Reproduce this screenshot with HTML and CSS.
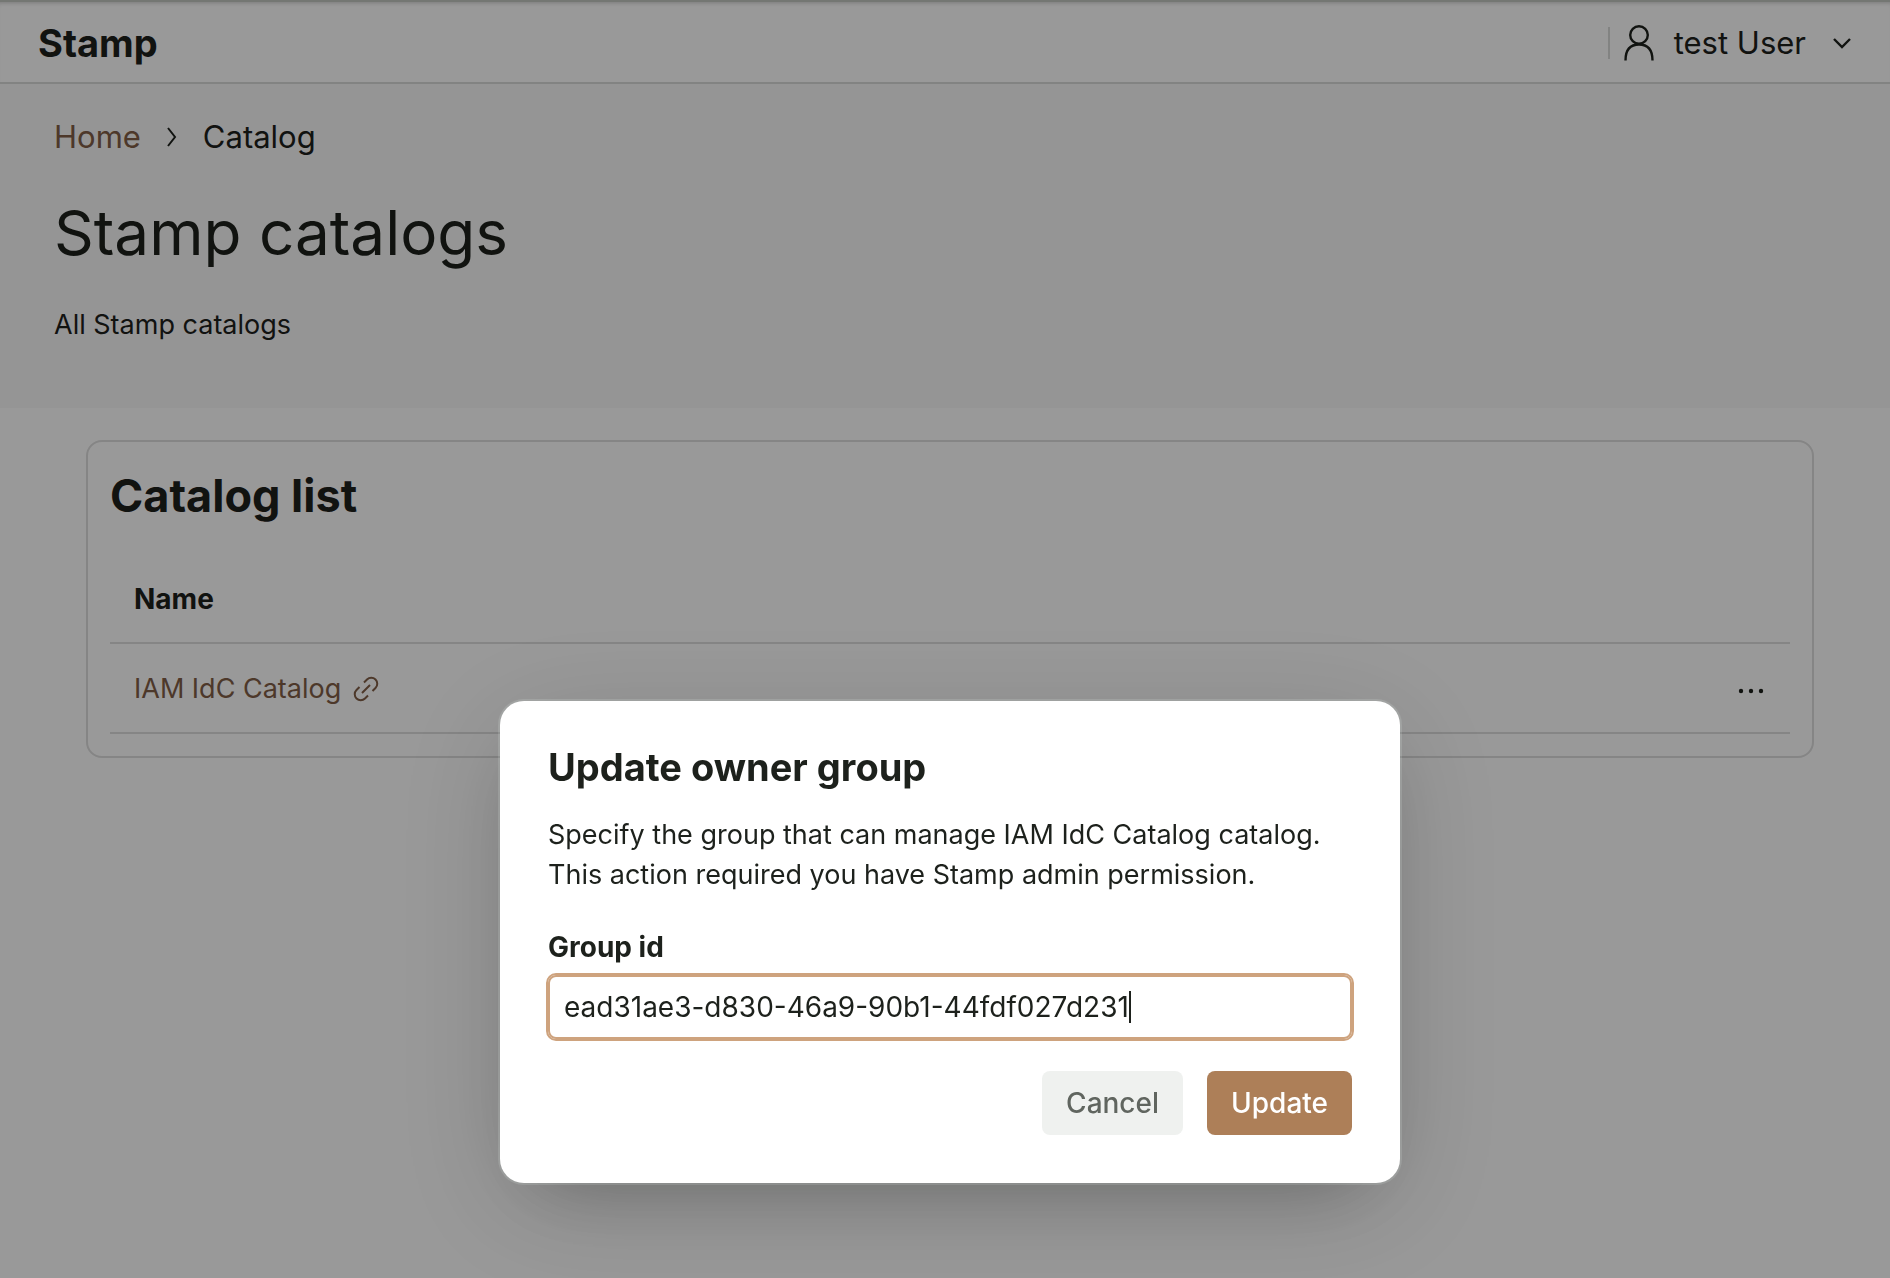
FILE: index.html
```html
<!DOCTYPE html>
<html lang="en">
<head>
<meta charset="utf-8">
<title>Stamp catalogs</title>
<link rel="stylesheet" href="styles.css">
</head>
<body>
<div class="page">
  <header class="topbar">
    <strong class="brand">Stamp</strong>
    <div class="account">
      <button class="account-button" type="button">
        <svg class="icon-user" viewBox="0 0 34 40" aria-hidden="true"><circle cx="17" cy="12" r="8.800"/><path d="M3.500 37.500C3.500 27 8 21.500 17 21.500s13.500 5.500 13.500 16"/></svg>
        <span>test User</span>
        <svg class="icon-down" viewBox="0 0 20 12" aria-hidden="true"><path d="M2 2l8 8 8-8"/></svg>
      </button>
    </div>
  </header>
  <section class="hero">
    <nav class="breadcrumb" aria-label="Breadcrumb">
      <a href="#">Home</a>
      <svg class="icon-right" viewBox="0 0 10 20" aria-hidden="true"><path d="M1 1l7 9-7 9"/></svg>
      <span>Catalog</span>
    </nav>
    <h1 class="hero-title">Stamp catalogs</h1>
    <p class="hero-text">All Stamp catalogs</p>
  </section>
  <main class="card">
    <h2 class="card-title">Catalog list</h2>
    <table class="catalogs">
      <thead>
        <tr><th scope="col">Name</th><td></td></tr>
      </thead>
      <tbody>
        <tr>
          <td><a class="catalog-link" href="#">IAM IdC Catalog
            <svg class="icon-link" viewBox="0 0 26 26" aria-hidden="true"><path d="M9 17l8-8M11 6.500l3-3a5.700 5.700 0 0 1 8.500 8.500l-3 3M6.500 11l-3 3a5.700 5.700 0 0 0 8.500 8.500l3-3"/></svg></a></td>
          <td class="row-actions"><button class="more" type="button" aria-label="Catalog actions"><svg class="icon-more" viewBox="0 0 30 6" aria-hidden="true"><circle cx="5" cy="3" r="2.200"/><circle cx="15" cy="3" r="2.200"/><circle cx="25" cy="3" r="2.200"/></svg></button></td>
        </tr>
      </tbody>
    </table>
  </main>
</div>
<div class="overlay">
  <form class="dialog" role="dialog" aria-labelledby="dialog-title">
    <h2 class="dialog-title" id="dialog-title">Update owner group</h2>
    <p class="dialog-text">Specify the group that can manage IAM IdC Catalog catalog. This action required you have Stamp admin permission.</p>
    <label class="field-label" for="group-id">Group id</label>
    <div class="field-box">
      <input class="field" id="group-id" type="text" value="ead31ae3-d830-46a9-90b1-44fdf027d231">
      <span class="caret" aria-hidden="true"></span>
    </div>
    <div class="dialog-actions">
      <button class="button button-soft" type="button">Cancel</button>
      <button class="button button-solid" type="submit">Update</button>
    </div>
  </form>
</div>
</body>
</html>
```
FILE: styles.css
```css
* { box-sizing: border-box; }

body {
  margin: 0;
  background: #fff;
  color: #1d211c;
  font: 27px/40px Inter, "Liberation Sans", sans-serif;
}

h1, h2, p { margin: 0; }

a { color: #815e46; text-decoration: none; }

button, input { font: inherit; color: inherit; }

svg { fill: none; stroke: currentColor; stroke-width: 2; flex: none; }

.page { min-height: 100vh; border-top: 2px solid #c2c6c0; }

.topbar {
  display: flex;
  align-items: center;
  justify-content: space-between;
  height: 82px;
  padding: 2px 38px 0;
  border-bottom: 2px solid #d9dad9;
  box-shadow: inset 0 4px 4px -3px rgba(0, 0, 0, 0.2);
}

.brand { font-size: 38px; line-height: 56px; }

.account {
  display: flex;
  align-items: center;
  height: 32px;
  border-left: 2px solid #d9dad9;
}

.account-button {
  display: flex;
  align-items: center;
  padding: 0 0 0 12px;
  border: 0;
  background: none;
  font-size: 31px;
}

.account-button span { margin: 0 26px 0 18px; }

.icon-user { width: 34px; height: 40px; stroke-width: 2.4; }
.icon-down { width: 20px; height: 12px; stroke-width: 2.4; }

.hero {
  height: 324px;
  padding: 29px 54px;
  background: #f9f9f9;
}

.breadcrumb {
  display: flex;
  align-items: center;
  gap: 26px;
  font-size: 31px;
  line-height: 48px;
}

.icon-right { width: 10px; height: 20px; }

.hero-title {
  margin-top: 32px;
  font-size: 62px;
  font-weight: 400;
  line-height: 80px;
}

.hero-text { margin-top: 32px; }

.card {
  margin: 32px 76px 32px 86px;
  padding: 22px;
  border: 2px solid #dedede;
  border-radius: 16px;
}

.card-title { padding-top: 2px; font-size: 45px; line-height: 60px; }

.catalogs {
  width: 100%;
  margin-top: 28px;
  border-collapse: separate;
  border-spacing: 0;
}

.catalogs th, .catalogs td {
  height: 90px;
  padding: 2px 24px 0;
  border-bottom: 2px solid #dedede;
  text-align: left;
}

.catalogs th, .field-label { font-size: 28px; font-weight: 700; }

.catalogs .row-actions { text-align: right; }

.catalog-link { display: inline-flex; align-items: center; gap: 12px; }

.icon-link { width: 26px; height: 26px; }

.more { padding: 0; border: 0; background: none; vertical-align: middle; }

.icon-more { display: block; width: 30px; height: 6px; fill: currentColor; stroke: none; }

.overlay {
  position: fixed;
  inset: 0;
  display: flex;
  align-items: flex-end;
  justify-content: center;
  padding: 0 0 95px 10px;
  background: rgba(0, 0, 0, 0.4);
}

.dialog {
  width: 900px;
  padding: 46px 48px 48px;
  border-radius: 24px;
  background: #fff;
  box-shadow:
    0 0 0 2px rgba(235, 245, 240, 0.14),
    0 24px 120px rgba(0, 0, 0, 0.15),
    0 32px 72px -40px rgba(0, 20, 0, 0.28);
}

.dialog-title { font-size: 38px; line-height: 40px; }

.dialog-text { margin-top: 28px; }

.field-label { display: block; margin-top: 32px; }

.field-box { position: relative; margin-top: 8px; }

.field {
  display: block;
  width: 100%;
  height: 64px;
  padding: 0 14px;
  border: 2px solid #cea37e;
  border-radius: 8px;
  outline: 2px solid #cea37e;
  background: #fff;
  font-size: 28px;
}

.caret {
  position: absolute;
  top: 16px;
  left: 581px;
  width: 2px;
  height: 32px;
  background: #1d211c;
}

.dialog-actions {
  display: flex;
  justify-content: flex-end;
  gap: 24px;
  margin-top: 32px;
}

.button {
  height: 64px;
  padding: 0 24px;
  border: 0;
  border-radius: 8px;
  font-size: 28px;
  font-weight: 500;
}

.button-soft { background: #eff1ef; color: #60655f; }
.button-solid { background: #ad7f58; color: #fff; }
```
